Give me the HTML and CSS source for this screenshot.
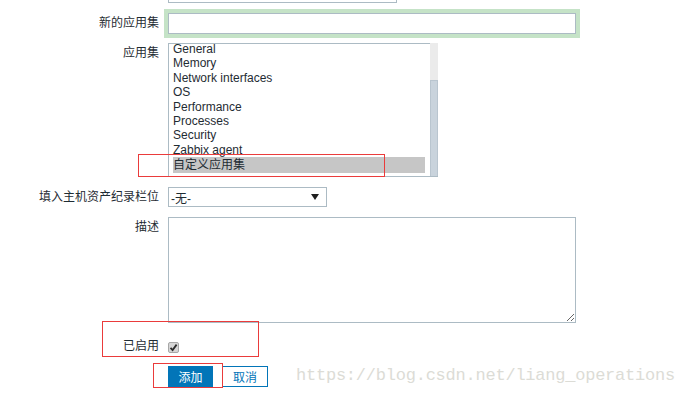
FILE: index.html
```html
<!DOCTYPE html>
<html lang="zh">
<head>
    <meta charset="UTF-8">
    <title>应用集</title>
    <link rel="stylesheet" href="styles.css">
</head>
<body>
    <div class="form">
        <div class="row row-prev">
            <span class="label"></span>
            <input class="text prev" type="text">
        </div>

        <div class="row">
            <label class="label">新的应用集</label>
            <div class="focus-ring"><input class="text wide" type="text"></div>
        </div>

        <div class="row">
            <label class="label">应用集</label>
            <div class="listbox">
                <ul class="options">
                    <li>General</li>
                    <li>Memory</li>
                    <li>Network interfaces</li>
                    <li>OS</li>
                    <li>Performance</li>
                    <li>Processes</li>
                    <li>Security</li>
                    <li>Zabbix agent</li>
                    <li class="selected">自定义应用集</li>
                </ul>
                <div class="scrollbar">
                    <div class="track"></div>
                    <div class="thumb"></div>
                </div>
            </div>
        </div>

        <div class="row">
            <label class="label">填入主机资产纪录栏位</label>
            <div class="select">
                <span>-无-</span>
                <svg width="8" height="6" viewBox="0 0 8 6"><polygon points="0,0 8,0 4,6" fill="#1f1f1f"/></svg>
            </div>
        </div>

        <div class="row">
            <label class="label">描述</label>
            <textarea class="desc"></textarea>
        </div>

        <div class="row row-check">
            <label class="label">已启用</label>
            <div class="checkbox">
                <svg width="9" height="9" viewBox="0 0 9 9"><path d="M1.5 4.8 L3.6 7 L7.6 1.6" fill="none" stroke="#2b2b2b" stroke-width="1.8"/></svg>
            </div>
        </div>

        <div class="row">
            <span class="label"></span>
            <div class="buttons">
                <button class="btn btn-primary">添加</button>
                <button class="btn btn-alt">取消</button>
            </div>
        </div>
    </div>

    <div class="mark mark-apps"></div>
    <div class="mark mark-enabled"></div>
    <div class="mark mark-add"></div>

    <div class="watermark">https://blog.csdn.net/liang_operations</div>
</body>
</html>
```

FILE: styles.css
```css
* {
    margin: 0;
    padding: 0;
    box-sizing: border-box;
}

body {
    font-family: 'Liberation Sans', Arial, 'Noto Sans CJK SC', sans-serif;
    font-size: 12px;
    color: #1f2c33;
    background: #fff;
    width: 687px;
    height: 396px;
    overflow: hidden;
    position: relative;
}

.form {
    display: flex;
    flex-direction: column;
    gap: 10px;
}

.row {
    display: grid;
    grid-template-columns: 159px auto;
    column-gap: 9px;
    align-items: start;
    justify-content: start;
}

.row-prev {
    margin-top: -17px;
}

.row-check {
    margin-top: 3px;
}

.label {
    text-align: right;
    padding-top: 3px;
    line-height: 14px;
    height: 20px;
}

.text {
    display: block;
    border: 1px solid #acbbc4;
    background: #fff;
    height: 20px;
    outline: none;
}

.prev {
    width: 229px;
}

.focus-ring {
    box-shadow: 0 0 0 4px #c5e3c7;
    margin-bottom: -1px;
}

.wide {
    width: 408px;
    height: 21px;
}

.listbox {
    display: flex;
    width: 270px;
    height: 134px;
    border-bottom: 1px solid #acbbc4;
}

.options {
    flex: 1;
    list-style: none;
    border-left: 1px solid #acbbc4;
    border-top: 1px solid #acbbc4;
    overflow: hidden;
    padding: 0 5px 0 4px;
}

.options li {
    height: 14.4px;
    line-height: 14.4px;
    white-space: nowrap;
}

.options li:first-child {
    margin-top: -2px;
}

.options .selected {
    height: 16px;
    line-height: 16px;
    background: #c6c6c6;
}

.scrollbar {
    width: 8px;
    display: flex;
    flex-direction: column;
}

.scrollbar .track {
    height: 37px;
    background: #ebebeb;
}

.scrollbar .thumb {
    flex: 1;
    background: #c9d3dc;
    border: 1px solid #b9c5cf;
    border-bottom: none;
}

.select {
    width: 159px;
    height: 20px;
    border: 1px solid #acbbc4;
    display: flex;
    align-items: center;
    justify-content: space-between;
    padding: 0 7px 0 2px;
}

.desc {
    display: block;
    width: 408px;
    height: 106px;
    border: 1px solid #acbbc4;
    outline: none;
    font-family: inherit;
}

.checkbox {
    width: 11px;
    height: 11px;
    margin-top: 6px;
    background: #d6d6d6;
    border: 1px solid #a7a7a7;
    border-radius: 2px;
    display: flex;
    align-items: center;
    justify-content: center;
}

.buttons {
    display: flex;
    gap: 9px;
}

.btn {
    font-family: inherit;
    font-size: 12px;
    height: 21px;
    width: 45px;
    border: 1px solid #0275b8;
    cursor: pointer;
}

.btn-primary {
    background: #0275b8;
    color: #fff;
}

.btn-alt {
    width: 46px;
    background: #fff;
    color: #0275b8;
}

/* screenshot annotations */
.mark {
    position: absolute;
    border: 1px solid #ea3b3b;
    pointer-events: none;
}

.mark-apps {
    left: 138px;
    top: 154px;
    width: 247px;
    height: 23px;
}

.mark-enabled {
    left: 102px;
    top: 321px;
    width: 157px;
    height: 36px;
}

.mark-add {
    left: 153px;
    top: 363px;
    width: 70px;
    height: 25px;
}

.watermark {
    position: absolute;
    left: 296px;
    top: 365px;
    font-family: 'Liberation Mono', 'Courier New', monospace;
    font-size: 17px;
    letter-spacing: -0.23px;
    line-height: 22px;
    color: #dcdcd6;
    white-space: nowrap;
}
```
